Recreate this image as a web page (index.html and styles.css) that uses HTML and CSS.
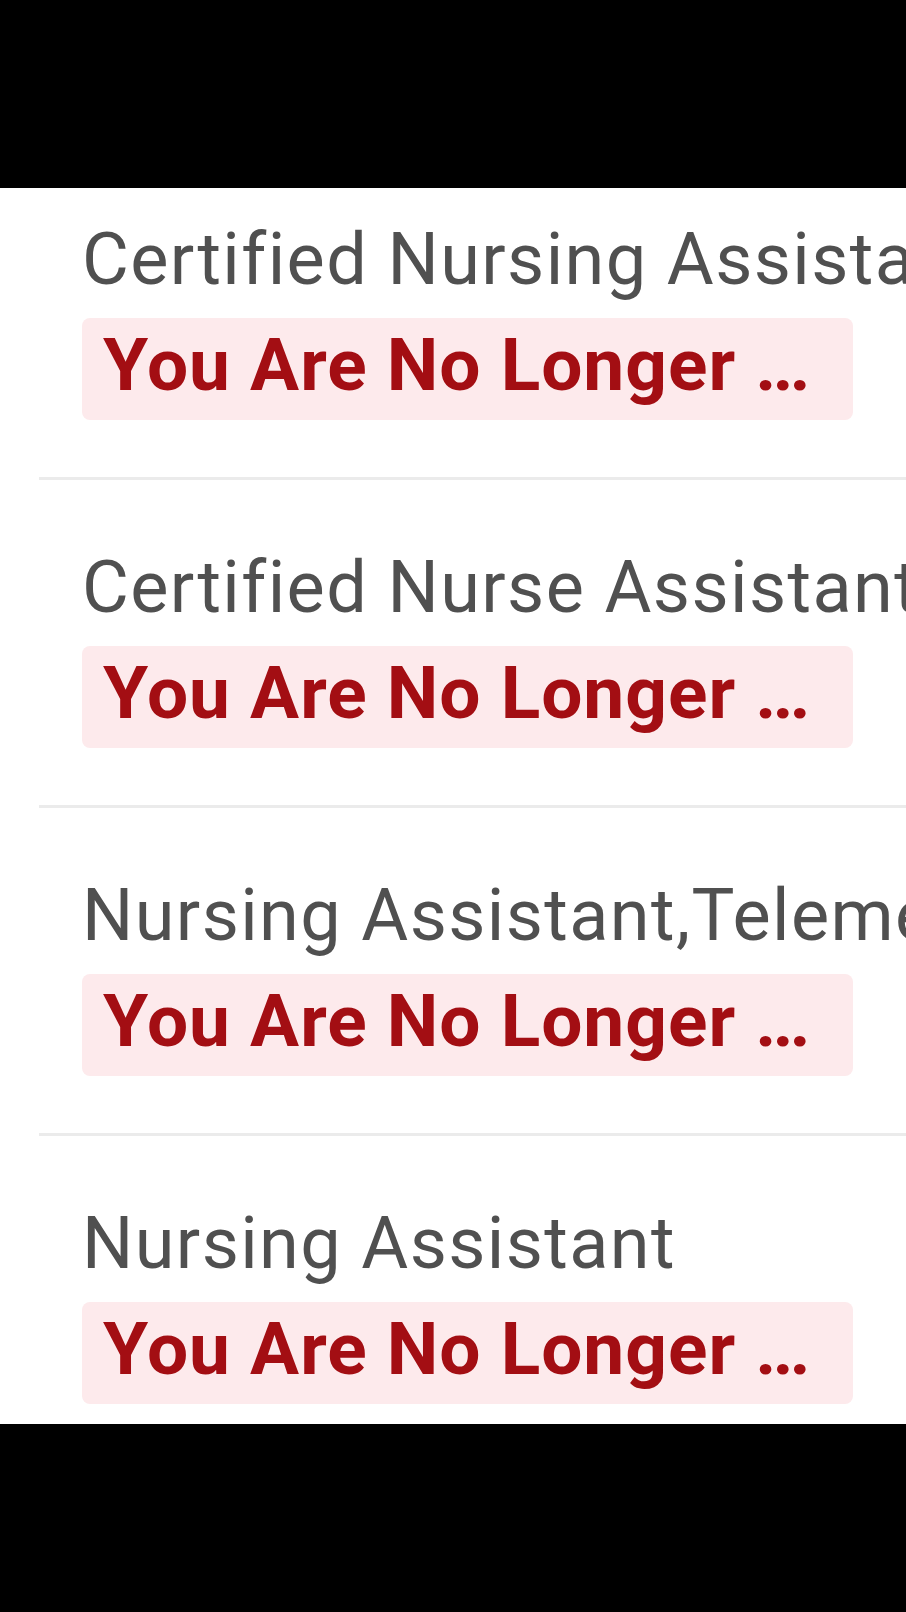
FILE: index.html
```html
<!DOCTYPE html>
<html lang="en">
  <head>
    <title>Applications</title>
    <meta charset="utf-8" />
    <meta name="viewport" content="width=device-width" />
    <link rel="stylesheet" href="styles.css">
  </head>
  <body>
    <div class="screen">
      <ul class="jobList">
        <li class="jobItem">
          <div class="jobTitle">Certified Nursing Assistant</div>
          <div class="status">You Are No Longer <span class="dots">...</span></div>
        </li>
        <li class="jobItem">
          <div class="jobTitle">Certified Nurse Assistant</div>
          <div class="status">You Are No Longer <span class="dots">...</span></div>
        </li>
        <li class="jobItem">
          <div class="jobTitle">Nursing Assistant,Telemetry</div>
          <div class="status">You Are No Longer <span class="dots">...</span></div>
        </li>
        <li class="jobItem">
          <div class="jobTitle">Nursing Assistant</div>
          <div class="status">You Are No Longer <span class="dots">...</span></div>
        </li>
      </ul>
    </div>
  </body>
</html>
```

FILE: styles.css
```css
html,
body {
  margin: 0;
  padding: 0;
  background-color: #000;
  overflow: hidden;
}
body {
  height: 1612px;
  display: flex;
  flex-direction: column;
  justify-content: center;
  font-family: Roboto, "Liberation Sans", sans-serif;
}
.screen {
  height: 1236px;
  background-color: #fff;
  overflow: hidden;
}
.jobList {
  list-style: none;
  margin: -36px 0 0 39px;
  padding: 0;
}
.jobItem {
  padding: 64px 0 57px 43px;
  border-bottom: 3px solid #ebebeb;
}
.jobTitle {
  font-size: 72px;
  line-height: 87px;
  letter-spacing: 1.4px;
  color: #505050;
  white-space: nowrap;
}
.status {
  box-sizing: border-box;
  width: 771px;
  height: 102px;
  margin-top: 15px;
  padding: 4px 21px 0;
  border-radius: 8px;
  background-color: #fdeaec;
  color: #a30e13;
  font-size: 73px;
  font-weight: bold;
  line-height: 87px;
  letter-spacing: 1px;
  white-space: nowrap;
}
.dots {
  letter-spacing: -4px;
}
```
